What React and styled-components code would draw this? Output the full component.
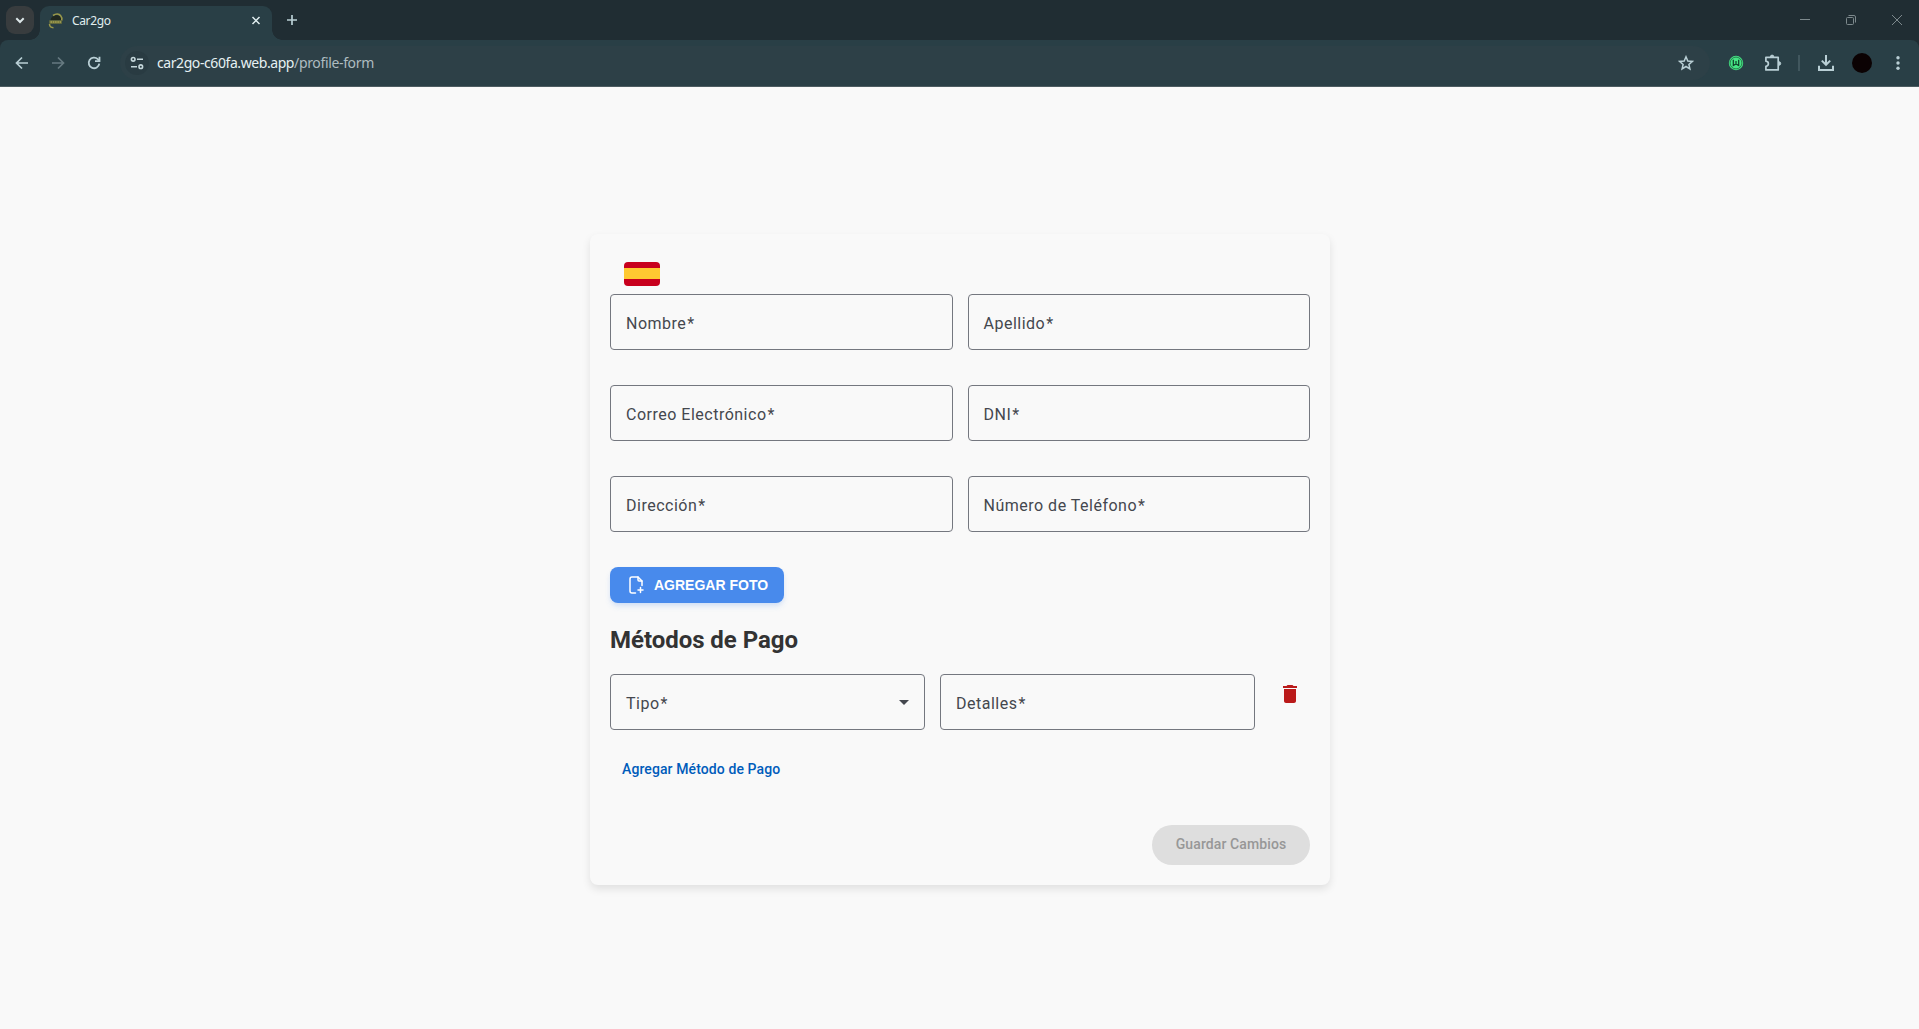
import React from "react";
import styled, { createGlobalStyle } from "styled-components";

const strip = "#202d33";
const bar = "#293f46";
const ui = '"Noto Sans", "Open Sans", sans-serif';

const GlobalStyle = createGlobalStyle`
  *, *::before, *::after { box-sizing: border-box; }
  body { margin: 0; background: #f9f9f9; font-family: Roboto, sans-serif; }
  button { font: inherit; border: 0; background: none; padding: 0; cursor: pointer; }
  svg { display: block; flex: none; }
`;

const Window = styled.div`
  height: 1029px;
  display: flex;
  flex-direction: column;
  overflow: hidden;
`;

const TabStrip = styled.header`
  height: 40px;
  background: ${strip};
  display: flex;
  align-items: flex-start;
  padding: 6px 0 0 6px;
`;

const TabSearch = styled.button`
  width: 28px;
  height: 28px;
  border-radius: 9px;
  background: #383c3e;
  color: #dce6e8;
  display: grid;
  place-items: center;
`;

const Tab = styled.div`
  position: relative;
  width: 232px;
  height: 34px;
  margin-left: 6px;
  padding: 0 8px 5px 8px;
  border-radius: 9px 9px 0 0;
  background: ${bar};
  display: flex;
  align-items: center;
  &::before, &::after {
    content: "";
    position: absolute;
    bottom: 0;
    width: 10px;
    height: 10px;
  }
  &::before { left: -10px; background: radial-gradient(circle at 0 0, transparent 9.5px, ${bar} 10px); }
  &::after { right: -10px; background: radial-gradient(circle at 100% 0, transparent 9.5px, ${bar} 10px); }
`;

const TabTitle = styled.span`
  flex: 1;
  margin-left: 8px;
  font: 12px/16px ${ui};
  letter-spacing: -0.35px;
  color: #e0eef0;
`;

const IconButton = styled.button`
  width: ${(p) => p.$w || 28}px;
  height: 28px;
  margin-left: ${(p) => p.$ml || 0}px;
  color: ${(p) => p.$color || "#b9cfd5"};
  display: grid;
  place-items: center;
`;

const WindowControls = styled.div`
  margin: 0 -1px 0 auto;
  display: flex;
  color: #7d898d;
`;

const Control = styled.div`
  width: 46px;
  height: 28px;
  display: grid;
  place-items: center;
`;

const ToolbarBack = styled.div`
  background: ${strip};
  height: 47px;
`;

const Toolbar = styled.nav`
  height: 47px;
  background: ${bar};
  border-bottom: 1px solid #4c5c61;
  border-radius: 8px 8px 0 0;
  display: flex;
  align-items: center;
  padding: 0 7px 0 8px;
`;

const AddressBar = styled.div`
  width: 1590px;
  height: 34px;
  margin-left: 12px;
  padding: 0 10px 0 5px;
  border-radius: 17px;
  background: #2d4047;
  display: flex;
  align-items: center;
`;

const SiteInfo = styled.span`
  width: 24px;
  height: 24px;
  border-radius: 50%;
  background: #293b42;
  color: #c4d6da;
  display: grid;
  place-items: center;
`;

const Url = styled.span`
  flex: 1;
  margin-left: 8px;
  font: 14px/20px ${ui};
  letter-spacing: -0.42px;
  color: #e6f1f3;
  span { color: #aebcc0; letter-spacing: -0.35px; }
`;

const Separator = styled.span`
  width: 2px;
  height: 16px;
  margin-left: 11px;
  background: #41575e;
`;

const Avatar = styled.span`
  width: 20px;
  height: 20px;
  margin-left: 12px;
  border-radius: 50%;
  background: #0b0203;
`;

const Page = styled.main`
  flex: 1;
  display: flex;
  justify-content: center;
  align-items: flex-start;
  padding: 147px 0 0 1px;
`;

const Card = styled.form`
  width: 740px;
  height: 651px;
  padding: 20px;
  border-radius: 8px;
  background: #f9f9f9;
  box-shadow: 0 4px 8px rgba(0, 0, 0, 0.1);
  display: flex;
  flex-direction: column;
`;

const FlagRow = styled.div`
  height: 40px;
  padding: 7.5px 0 0 14px;
`;

const Flag = styled.div`
  width: 36px;
  height: 24.5px;
  border-radius: 4px;
  background: linear-gradient(#c8001d 0 6.5px, #ffc931 6.5px 17.5px, #c8001d 17.5px);
`;

const Fields = styled.div`
  display: grid;
  grid-template-columns: 1fr 1fr;
  gap: 35px 15px;
`;

const Field = styled.label`
  height: 56px;
  padding: 3px 15px 0;
  border: 1px solid #74777f;
  border-radius: 4px;
  display: flex;
  align-items: center;
  font-size: 16px;
  line-height: 24px;
  letter-spacing: 0.5px;
  color: #44474e;
`;

const Required = styled.span`
  margin-left: 1px;
`;

const Arrow = styled.svg`
  margin: 0 0 3px auto;
`;

const PhotoButton = styled.button`
  align-self: flex-start;
  width: 174px;
  height: 36px;
  margin-top: 35px;
  padding-left: 14px;
  border-radius: 8px;
  background: #488aec;
  box-shadow: 0 4px 6px -1px rgba(72, 138, 236, 0.19), 0 2px 4px -1px rgba(72, 138, 236, 0.09);
  color: #fff;
  display: flex;
  align-items: center;
  gap: 6px;
  && { font: bold 14px/16px "Liberation Sans", Arial, sans-serif; }
`;

const Title = styled.h2`
  margin: 21px 0 18px;
  font-size: 24px;
  line-height: 32px;
  font-weight: 700;
  letter-spacing: -0.04px;
  color: #333;
`;

const PaymentRow = styled.div`
  display: grid;
  grid-template-columns: 315px 315px 40px;
  gap: 15px;
`;

const DeleteButton = styled.button`
  width: 40px;
  height: 40px;
  color: #ba1a1a;
  display: grid;
  place-items: center;
`;

const AddPayment = styled.button`
  align-self: flex-start;
  height: 40px;
  margin-top: 19px;
  padding: 0 12px;
  && { font-size: 14px; font-weight: 500; letter-spacing: 0.1px; }
  color: #005cbb;
`;

const SaveButton = styled.button`
  align-self: flex-end;
  width: 158px;
  height: 40px;
  margin-top: auto;
  padding-bottom: 2px;
  border-radius: 20px;
  background: #dedede;
  color: #979797;
  && { font-size: 14px; font-weight: 500; letter-spacing: 0.1px; }
`;

const Line = ({ size = 16, w = 1.8, box = 16, children }) => (
  <svg width={size} height={size} viewBox={`0 0 ${box} ${box}`} fill="none" stroke="currentColor" strokeWidth={w}>
    {children}
  </svg>
);

const Logo = () => (
  <svg width="16" height="16" viewBox="0 0 16 16" fill="none">
    <path d="M2.500 7C3 3.500 6 2 9 2.300c3 .4 4.500 2.200 4.200 4.700z" fill="#20271f" />
    <path d="M5 2.500C8 .4 11.200.8 12.700 2.800c1.300 1.600 1.500 3.200 1 4.700" stroke="#99984a" strokeWidth="1.600" />
    <path d="M1.300 7.300h12.500v3.500H1.300z" fill="#6f733b" />
    <path d="M2.500 9h10.500" stroke="#c1bc62" strokeWidth="1" strokeDasharray="1.500 .8" />
    <path d="M1.500 11c0 2.300 1.500 3.600 4 3.700" stroke="#99984a" strokeWidth="1.500" />
  </svg>
);

const FIELDS = ["Nombre", "Apellido", "Correo Electrónico", "DNI", "Dirección", "Número de Teléfono"];

export default function App() {
  return (
    <Window>
      <GlobalStyle />
      <TabStrip>
        <TabSearch type="button"><Line w={2}><path d="M4.300 6.300 8 10l3.700-3.700" /></Line></TabSearch>
        <Tab>
          <Logo />
          <TabTitle>Car2go</TabTitle>
          <IconButton $w={16} $color="#e0eef0"><Line w={1.500}><path d="m4.500 4 7 7m0-7-7 7" /></Line></IconButton>
        </Tab>
        <IconButton $ml={6}><Line w={1.700}><path d="M8 3v10M3 8h10" /></Line></IconButton>
        <WindowControls>
          <Control><Line w={1}><path d="M3 7.500h10" /></Line></Control>
          <Control>
            <Line w={1}>
              <rect x="3.500" y="5.500" width="7" height="7" rx="1" />
              <path d="M5.500 3.500H11A1.500 1.500 0 0 1 12.500 5v5.500" />
            </Line>
          </Control>
          <Control><Line w={1}><path d="m3 3 10 10m0-10L3 13" /></Line></Control>
        </WindowControls>
      </TabStrip>
      <ToolbarBack>
        <Toolbar>
          <IconButton><Line w={1.700}><path d="M14 8H3M8 2.500 2.500 8 8 13.500" /></Line></IconButton>
          <IconButton $ml={8} $color="#667a81"><Line w={1.700}><path d="M2 8h11M8 2.500 13.500 8 8 13.500" /></Line></IconButton>
          <IconButton $ml={8}>
            <Line>
              <path d="M13.300 8.700A5.300 5.300 0 1 1 11.800 4.200L13.500 6" />
              <path d="M13.500 1.800V6.200H9" />
            </Line>
          </IconButton>
          <AddressBar>
            <SiteInfo>
              <Line w={1.600}>
                <circle cx="4.200" cy="4.300" r="1.800" /><path d="M8 4.300h6M2 11.700h6" /><circle cx="11.800" cy="11.700" r="1.800" />
              </Line>
            </SiteInfo>
            <Url>car2go-c60fa.web.app<span>/profile-form</span></Url>
            <IconButton>
              <Line w={1.500}><path d="m8 1.800 1.800 4.200 4.500.4-3.400 3 1 4.500L8 11.500l-3.900 2.400 1-4.500-3.400-3 4.500-.4z" /></Line>
            </IconButton>
          </AddressBar>
          <IconButton $ml={12}>
            <svg width="16" height="16" viewBox="0 0 16 16" fill="none">
              <circle cx="8" cy="8" r="7.200" fill="#45e585" />
              <circle cx="8" cy="8" r="5.900" stroke="#1c5537" strokeWidth=".7" />
              <path d="M5.300 4.800v5.700L8 9l2.700 1.500V4.800M8 6v3" stroke="#0f3a27" strokeWidth="1.200" />
            </svg>
          </IconButton>
          <IconButton $ml={9}>
            <Line size={18} box={18} w={1.700}>
              <path d="M1.900 3.300h12.300v12.600H1.900v-3.600c3.300-.5 3.300-4.600 0-5.100z" strokeLinejoin="round" />
              <path d="M6.400 2.800a1.700 1.700 0 0 1 3.400 0zM15 7.800a1.700 1.700 0 0 1 0 3.400z" fill="currentColor" strokeWidth="1" />
            </Line>
          </IconButton>
          <Separator />
          <IconButton $ml={12}>
            <Line w={2}><path d="M8 0v9.500M3.800 5.600 8 9.800l4.200-4.200M1 10.800V15h14v-4.200" /></Line>
          </IconButton>
          <Avatar />
          <IconButton $ml={12}>
            <svg width="16" height="16" fill="currentColor"><circle cx="8" cy="2.700" r="1.700" /><circle cx="8" cy="8" r="1.700" /><circle cx="8" cy="13.300" r="1.700" /></svg>
          </IconButton>
        </Toolbar>
      </ToolbarBack>
      <Page>
        <Card>
          <FlagRow><Flag /></FlagRow>
          <Fields>{FIELDS.map((label) => <Field key={label}>{label}<Required>*</Required></Field>)}</Fields>
          <PhotoButton type="button">
            <svg width="24" height="24" viewBox="0 0 24 24" fill="none" stroke="currentColor" strokeWidth="1.500" strokeLinejoin="round" strokeLinecap="round">
              <path d="M11.500 20H8a2 2 0 0 1-2-2V6a2 2 0 0 1 2-2h6l4 4v4.500" />
              <path d="M14 4v3a1 1 0 0 0 1 1h3M16.500 14.500v5M14 17h5" />
            </svg>
            AGREGAR FOTO
          </PhotoButton>
          <Title>Métodos de Pago</Title>
          <PaymentRow>
            <Field>
              Tipo<Required>*</Required>
              <Arrow width="10" height="5" viewBox="0 0 10 5" fill="#44474e"><path d="M0 0h10L5 5z" /></Arrow>
            </Field>
            <Field>Detalles<Required>*</Required></Field>
            <DeleteButton type="button">
              <svg width="24" height="24" viewBox="0 0 24 24" fill="currentColor"><path d="M6 19c0 1.100.9 2 2 2h8c1.100 0 2-.9 2-2V7H6v12zM19 4h-3.500l-1-1h-5l-1 1H5v2h14V4z" /></svg>
            </DeleteButton>
          </PaymentRow>
          <AddPayment type="button">Agregar Método de Pago</AddPayment>
          <SaveButton type="button" disabled>Guardar Cambios</SaveButton>
        </Card>
      </Page>
    </Window>
  );
}
